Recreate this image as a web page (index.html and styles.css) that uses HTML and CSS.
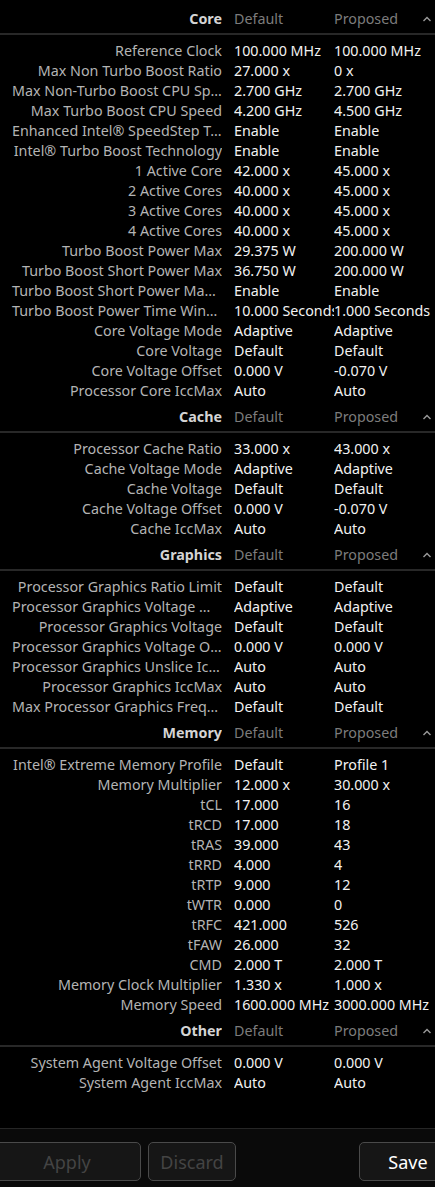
FILE: index.html
```html
<!DOCTYPE html>
<html>
<head>
<meta charset="utf-8">
<link rel="stylesheet" href="styles.css">
</head>
<body>
<div class="app">
  <div class="content" id="content"></div>
  <div class="footer">
    <button class="btn btn-apply">Apply</button>
    <button class="btn btn-discard">Discard</button>
    <span class="spacer"></span>
    <button class="btn btn-save">Save</button>
  </div>
</div>
<script src="app.js"></script>
</body>
</html>
```

FILE: styles.css
```css
* { box-sizing: border-box; }
html, body { margin: 0; padding: 0; background: #000; }
body {
  font-family: "Noto Sans", "Open Sans", sans-serif;
  font-size: 14.3px;
  color: #f0f0f0;
  width: 435px;
  height: 1187px;
  overflow: hidden;
}
.app { display: flex; flex-direction: column; height: 1187px; }
.content { flex: 1; padding-top: 3px; background: #000; }
.section-head {
  display: flex;
  align-items: center;
  height: 32px;
  line-height: 20px;
  padding-top: 6px;
  padding-bottom: 4px;
  border-bottom: 2px solid #282828;
}
.section-body { padding-top: 6px; }
.row { display: flex; align-items: center; height: 20px; line-height: 20px; }
.label {
  width: 222px;
  padding-left: 12px;
  margin-right: 12px;
  text-align: right;
  white-space: nowrap;
  overflow: hidden;
  text-overflow: ellipsis;
  color: #b4b4b4;
  flex: none;
}
.title { color: #d4d4d4; font-weight: bold; }
.val {
  width: 100px;
  white-space: nowrap;
  overflow: hidden;
  flex: none;
  color: #f2f2f2;
}
.val2 { flex: 1; white-space: nowrap; overflow: hidden; color: #f2f2f2; }
.hcol { color: #7c7c7c; }
.caret { width: 12px; margin-right: 1px; display: flex; align-items: center; }
.footer {
  height: 59px;
  border-top: 1px solid #262626;
  background: #0a0a0a;
  display: flex;
  align-items: flex-start;
  padding-top: 13px;
  overflow: hidden;
}
.btn {
  height: 39px;
  border: 1px solid #4a4a4a;
  border-radius: 5px;
  background: #161616;
  font-family: "Noto Sans", "Open Sans", sans-serif;
  font-size: 18px;
  padding: 0;
  flex: none;
}
.btn-apply { width: 148px; margin-left: -7px; color: #444; }
.btn-discard { width: 88px; margin-left: 7px; color: #444; }
.spacer { flex: 1; }
.btn-save { width: 98px; margin-right: -22px; color: #fff; }
```

FILE: app.js
```js
const sections = [
  ["Core", [
    ["Reference Clock", "100.000 MHz", "100.000 MHz"],
    ["Max Non Turbo Boost Ratio", "27.000 x", "0 x"],
    ["Max Non-Turbo Boost CPU Speed", "2.700 GHz", "2.700 GHz"],
    ["Max Turbo Boost CPU Speed", "4.200 GHz", "4.500 GHz"],
    ["Enhanced Intel® SpeedStep Technology", "Enable", "Enable"],
    ["Intel® Turbo Boost Technology", "Enable", "Enable"],
    ["1 Active Core", "42.000 x", "45.000 x"],
    ["2 Active Cores", "40.000 x", "45.000 x"],
    ["3 Active Cores", "40.000 x", "45.000 x"],
    ["4 Active Cores", "40.000 x", "45.000 x"],
    ["Turbo Boost Power Max", "29.375 W", "200.000 W"],
    ["Turbo Boost Short Power Max", "36.750 W", "200.000 W"],
    ["Turbo Boost Short Power Max Enable", "Enable", "Enable"],
    ["Turbo Boost Power Time Window", "10.000 Seconds", "1.000 Seconds"],
    ["Core Voltage Mode", "Adaptive", "Adaptive"],
    ["Core Voltage", "Default", "Default"],
    ["Core Voltage Offset", "0.000 V", "-0.070 V"],
    ["Processor Core IccMax", "Auto", "Auto"]
  ]],
  ["Cache", [
    ["Processor Cache Ratio", "33.000 x", "43.000 x"],
    ["Cache Voltage Mode", "Adaptive", "Adaptive"],
    ["Cache Voltage", "Default", "Default"],
    ["Cache Voltage Offset", "0.000 V", "-0.070 V"],
    ["Cache IccMax", "Auto", "Auto"]
  ]],
  ["Graphics", [
    ["Processor Graphics Ratio Limit", "Default", "Default"],
    ["Processor Graphics Voltage Mode", "Adaptive", "Adaptive"],
    ["Processor Graphics Voltage", "Default", "Default"],
    ["Processor Graphics Voltage Offset", "0.000 V", "0.000 V"],
    ["Processor Graphics Unslice IccMax", "Auto", "Auto"],
    ["Processor Graphics IccMax", "Auto", "Auto"],
    ["Max Processor Graphics Frequency", "Default", "Default"]
  ]],
  ["Memory", [
    ["Intel® Extreme Memory Profile", "Default", "Profile 1"],
    ["Memory Multiplier", "12.000 x", "30.000 x"],
    ["tCL", "17.000", "16"],
    ["tRCD", "17.000", "18"],
    ["tRAS", "39.000", "43"],
    ["tRRD", "4.000", "4"],
    ["tRTP", "9.000", "12"],
    ["tWTR", "0.000", "0"],
    ["tRFC", "421.000", "526"],
    ["tFAW", "26.000", "32"],
    ["CMD", "2.000 T", "2.000 T"],
    ["Memory Clock Multiplier", "1.330 x", "1.000 x"],
    ["Memory Speed", "1600.000 MHz", "3000.000 MHz"]
  ]],
  ["Other", [
    ["System Agent Voltage Offset", "0.000 V", "0.000 V"],
    ["System Agent IccMax", "Auto", "Auto"]
  ]]
];
const caret = '<svg width="10" height="6" viewBox="0 0 10 6"><polyline points="1.5,5 5,1.5 8.5,5" fill="none" stroke="#9a9a9a" stroke-width="1.4"/></svg>';
const root = document.getElementById("content");
let html = "";
for (const [name, rows] of sections) {
  html += '<div class="section"><div class="section-head">' +
    '<div class="label title">' + name + '</div>' +
    '<div class="val hcol">Default</div>' +
    '<div class="val2 hcol">Proposed</div>' +
    '<div class="caret">' + caret + '</div></div><div class="section-body">';
  for (const [l, a, b] of rows) {
    html += '<div class="row"><div class="label">' + l + '</div><div class="val">' + a + '</div><div class="val2">' + b + '</div></div>';
  }
  html += '</div></div>';
}
root.innerHTML = html;
```
